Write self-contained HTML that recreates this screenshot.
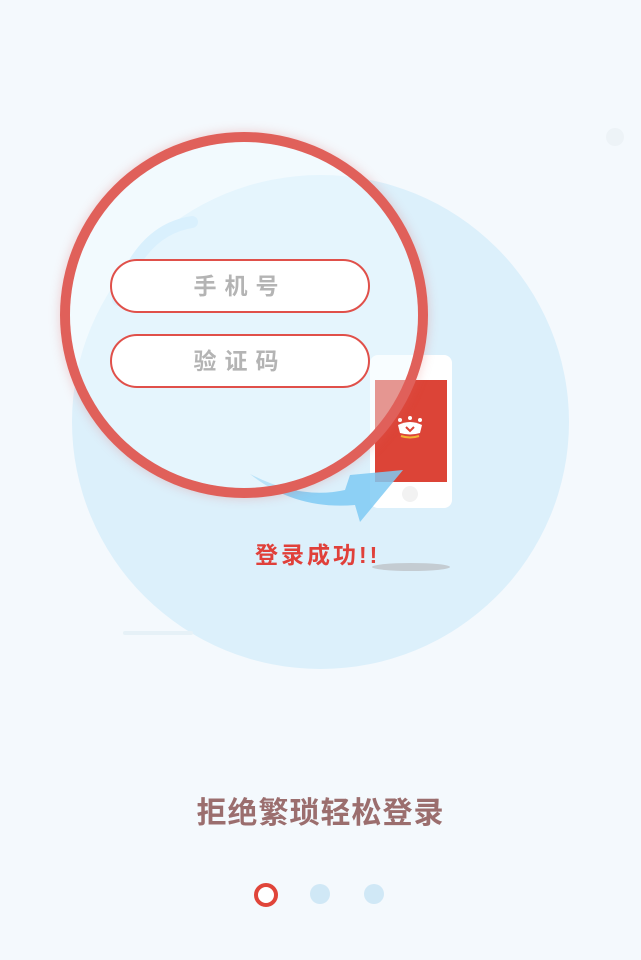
<!DOCTYPE html>
<html><head><meta charset="utf-8">
<style>
html,body{margin:0;padding:0;}
body{width:641px;height:960px;background:#f4f9fd;position:relative;overflow:hidden;font-family:"Liberation Sans","Noto Sans CJK SC",sans-serif;}
.abs{position:absolute;}
.field{position:absolute;left:110px;width:256px;height:50px;border:2px solid #e0504a;border-radius:27px;background:#fff;color:#b4b4b4;font-size:23px;font-weight:bold;text-align:center;line-height:50px;letter-spacing:8px;}
</style></head><body>
<div class="abs" style="left:72px;top:175px;width:497px;height:494px;border-radius:50%;background:#dcf0fb;"></div>
<div class="abs" style="left:123px;top:631px;width:70px;height:4px;background:#e6f1f7;border-radius:2px;"></div>
<div class="abs" style="left:606px;top:128px;width:18px;height:18px;border-radius:50%;background:#edf3f7;"></div>
<!-- phone -->
<div class="abs" style="left:370px;top:355px;width:82px;height:153px;background:#fff;border-radius:8px;"></div>
<div class="abs" style="left:375px;top:380px;width:72px;height:102px;background:#dc4437;"></div>
<div class="abs" style="left:402px;top:486px;width:16px;height:16px;border-radius:50%;background:#f2f2f2;"></div>
<svg class="abs" style="left:396px;top:415px" width="28" height="24" viewBox="0 0 28 24">
<circle cx="4" cy="5" r="2" fill="#fff"/><circle cx="14" cy="3" r="2" fill="#fff"/><circle cx="24" cy="5" r="2" fill="#fff"/>
<path d="M2 10 Q14 4 26 10 L24 18 Q14 21 4 18Z" fill="#fff"/>
<path d="M10 12 L14 16 L18 12" stroke="#dc4437" stroke-width="2" fill="none"/>
<path d="M5 21 Q14 24 23 21" stroke="#f3b233" stroke-width="2" fill="none"/>
</svg>
<div class="abs" style="left:372px;top:563px;width:78px;height:8px;border-radius:50%;background:#c4ccd2;"></div>
<!-- arrow -->
<svg class="abs" style="left:100px;top:200px" width="320" height="330" viewBox="100 200 320 330">
<path d="M192 222 Q140 230 118 300" stroke="#c6e8fb" stroke-width="12" fill="none" stroke-linecap="round"/>
<path d="M250 474 Q300 500 345 490 L350 475 L403 470 L360 522 L355 505 Q295 510 250 474Z" fill="#7fcaf3" opacity="0.85"/>
</svg>
<!-- lens -->
<div class="abs" style="left:70px;top:142px;width:348px;height:346px;border-radius:50%;background:rgba(240,250,255,0.45);box-shadow:0 0 0 10px #e0605a, 0 0 10px 11px rgba(224,96,90,0.25);"></div>
<div class="field" style="top:259px;">手机号</div>
<div class="field" style="top:334px;">验证码</div>
<div class="abs" style="left:255px;top:536px;color:#e0403a;font-size:23px;letter-spacing:3px;font-weight:bold;">登录成功!!</div>
<div class="abs" style="left:0;width:641px;top:788px;text-align:center;color:#9b6e6e;font-size:30px;font-weight:bold;letter-spacing:1px;">拒绝繁琐轻松登录</div>
<div class="abs" style="left:254px;top:883px;width:16px;height:16px;border:4px solid #e0453a;border-radius:50%;background:#fff;"></div>
<div class="abs" style="left:310px;top:884px;width:20px;height:20px;border-radius:50%;background:#d0e8f6;"></div>
<div class="abs" style="left:364px;top:884px;width:20px;height:20px;border-radius:50%;background:#d0e8f6;"></div>
</body></html>
